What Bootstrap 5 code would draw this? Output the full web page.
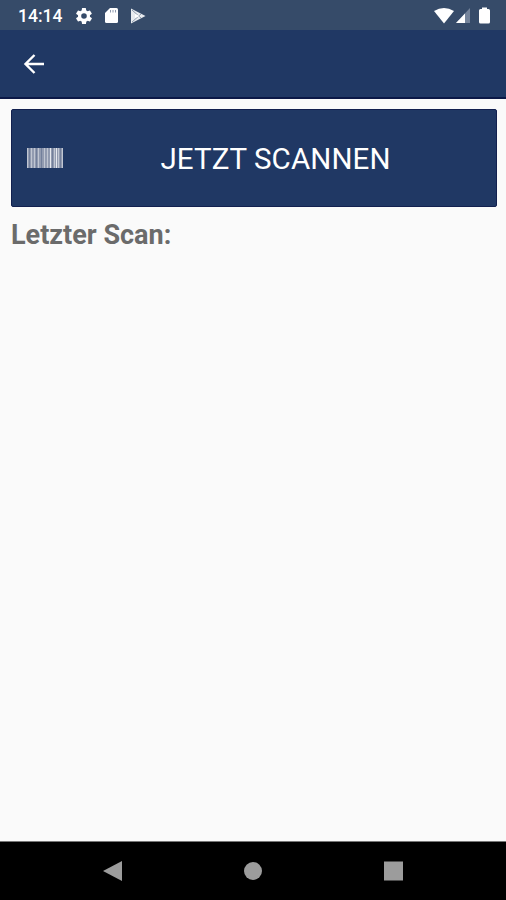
<!DOCTYPE html>
<html lang="de">
<head>
<meta charset="utf-8">
<meta name="viewport" content="width=device-width, initial-scale=1">
<title>Scan</title>
<link rel="stylesheet" href="https://cdn.jsdelivr.net/npm/bootstrap@5.3.0/dist/css/bootstrap.min.css">
<style>
body { font-family: Roboto, "Liberation Sans", sans-serif; background: #fafafa; overflow: hidden; }
svg { display: block; flex: none; }
.status-bar { height: 30px; background: #364b69; padding: 1px 16px 0 18px; }
.clock { font-size: 17.5px; font-weight: 500; line-height: 30px; width: 58px; }
.sd-icon { margin-left: 13px; }
.play-icon { margin-left: 12px; }
.signal-icon { margin-left: 2px; }
.battery-icon { margin-left: 9px; }
.app-bar { height: 69px; background: #203864; border-bottom: 2px solid #0b1847; padding-left: 23px; }
.content-area { padding: 10px 9px 0 11px; }
.btn-scan, .btn-scan:hover { height: 98px; background: #203864; color: #fff; border: 1px solid #12204f; border-radius: 2px; padding: 0 16px 0 15px; font-size: 29.5px; letter-spacing: .1px; }
.scan-label { padding: 2px 0 0 16px; }
.last-scan { font-size: 27px; font-weight: 700; line-height: 32px; color: #6b6b6b; margin-top: 12px; }
.nav-keys { height: 59px; background: #000; border-top: 1px solid #777; }
.key-row { width: 300px; }
</style>
<script src="https://cdn.jsdelivr.net/npm/bootstrap@5.3.0/dist/js/bootstrap.bundle.min.js"></script>
</head>
<body class="d-flex flex-column vh-100">
<header>
  <div class="status-bar d-flex align-items-center text-white">
    <span class="clock">14:14</span>
    <svg width="16" height="16" viewBox="2 2 20 20" fill="#fff"><path d="M19.4 13a7.500 7.500 0 0 0 0-2l2.100-1.600a.5.5 0 0 0 .1-.7l-2-3.400a.5.5 0 0 0-.6-.2l-2.500 1a7.300 7.300 0 0 0-1.700-1l-.4-2.600A.5.5 0 0 0 14 2h-4a.5.5 0 0 0-.5.4L9.100 5.100a7.300 7.300 0 0 0-1.700 1l-2.500-1a.5.5 0 0 0-.6.200l-2 3.400a.5.5 0 0 0 .1.700L4.600 11a7.500 7.500 0 0 0 0 2l-2.200 1.600a.5.5 0 0 0-.1.700l2 3.400c.1.200.4.300.6.200l2.500-1a7.300 7.300 0 0 0 1.700 1l.4 2.700c0 .2.200.4.5.4h4c.2 0 .5-.2.500-.4l.4-2.700a7.300 7.300 0 0 0 1.700-1l2.500 1c.2.100.5 0 .6-.2l2-3.400a.5.5 0 0 0-.1-.7zM12 15.500a3.500 3.500 0 1 1 0-7 3.500 3.500 0 0 1 0 7z"/></svg>
    <svg class="sd-icon" width="13" height="15" viewBox="0 0 13 15"><path fill="#fff" d="M5 0h6.500Q13 0 13 1.500v12q0 1.500-1.500 1.500h-10Q0 15 0 13.500V5z"/><path stroke="#8e9aae" stroke-width="1" d="M5.500 2v2.500M8 2v2.500M10.500 2v2.500"/></svg>
    <svg class="play-icon" width="16" height="16" viewBox="0 0 16 16"><path fill="#e8ebef" d="M1 .5L15.500 8 1 15.500z"/><path d="M2 2l9 8M2 14l9-8" stroke="#8d9aac" stroke-width="1"/><path fill="#fff" d="M5 6l5 2-5 2z"/></svg>
    <svg class="ms-auto" width="20" height="16" viewBox="0 0 20 16"><path fill="#fff" d="M0 3Q10-3 20 3L10 15.500z"/></svg>
    <svg class="signal-icon" width="14" height="15" viewBox="0 0 14 15"><path fill="#75849b" d="M14 0v15H0z"/><path fill="#fff" d="M9 5.400V15H0z"/></svg>
    <svg class="battery-icon" width="11" height="17" viewBox="0 0 11 16"><path fill="#fff" d="M3 0h5v1.500h1.500Q11 1.500 11 3v11.500Q11 16 9.500 16h-8Q0 16 0 14.500V3q0-1.500 1.500-1.500H3z"/></svg>
  </div>
  <nav class="app-bar d-flex align-items-center" aria-label="Navigation">
    <svg width="22" height="20" viewBox="0 0 22 20" fill="none" stroke="#fff" stroke-width="2.400"><path d="M21 10H2.500M11.500 1L2.500 10l9 9"/></svg>
  </nav>
</header>
<main class="content-area flex-grow-1">
  <button type="button" class="btn btn-scan w-100 d-flex align-items-center">
    <svg width="36" height="20" viewBox="0 0 36 20"><path fill="#929bb0" d="M0 0h36v20H0z"/><path stroke="#c0c6d2" d="M.5 0v20M4.500 0v20M7.500 0v20M11.500 0v20M17.500 0v20M20.500 0v20M27.500 0v20M31.500 0v20M35.500 0v20"/><path stroke="#e6e9ef" d="M23.500 0v20M29.500 0v20"/><path stroke="#727f9b" d="M2.500 0v20M9.500 0v20M14.500 0v20M25.500 0v20M33.500 0v20"/></svg>
    <span class="scan-label flex-grow-1 text-center text-nowrap">JETZT SCANNEN</span>
    <span class="pe-2"></span>
  </button>
  <h1 class="last-scan mb-0">Letzter Scan:</h1>
</main>
<footer class="nav-keys d-flex align-items-center">
  <div class="key-row d-flex justify-content-between mx-auto">
    <svg width="19" height="20" viewBox="0 0 19 20"><path fill="#9c9c9c" d="M0 10L19 0v20z"/></svg>
    <svg width="18" height="20" viewBox="0 0 18 20"><circle cx="9" cy="10" r="9" fill="#9c9c9c"/></svg>
    <svg width="19" height="20" viewBox="0 0 19 20"><path fill="#9c9c9c" d="M0 .5h19v19H0z"/></svg>
  </div>
</footer>
</body>
</html>
